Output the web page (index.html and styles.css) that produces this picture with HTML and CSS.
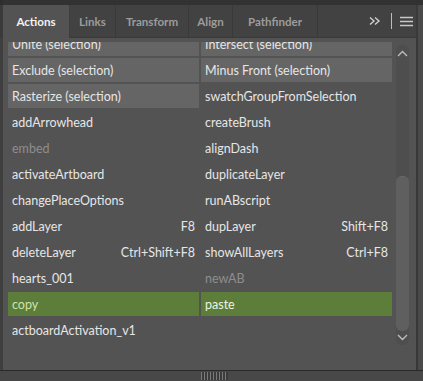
FILE: index.html
```html
<!DOCTYPE html>
<html>
<head>
<meta charset="utf-8">
<link rel="stylesheet" href="styles.css">
</head>
<body>
<div class="panel">
  <div class="topstrip"></div>
  <div class="tabbar">
    <div class="tab active">Actions</div>
    <div class="tab t-links">Links</div>
    <div class="tab t-transform">Transform</div>
    <div class="tab t-align">Align</div>
    <div class="tab t-path">Pathfinder</div>
    <div class="tabfill">
      <svg class="more" width="12" height="10" viewBox="0 0 12 10"><path d="M1 1.5 L5 5 L1 8.5 M6 1.5 L10 5 L6 8.5" fill="none" stroke="#d0d0d0" stroke-width="1.4"/></svg>
      <span class="vsep"></span>
      <svg class="menu" width="13" height="11" viewBox="0 0 13 11"><path d="M0 1.5 H13 M0 5.5 H13 M0 9.5 H13" stroke="#c8c8c8" stroke-width="1.3"/></svg>
    </div>
  </div>
  <div class="content">
    <div class="viewport">
      <div class="grid">
        <div class="row btn">Unite (selection)</div>
        <div class="row btn">Intersect (selection)</div>
        <div class="row btn">Exclude (selection)</div>
        <div class="row btn">Minus Front (selection)</div>
        <div class="row btn">Rasterize (selection)</div>
        <div class="row">swatchGroupFromSelection</div>
        <div class="row">addArrowhead</div>
        <div class="row">createBrush</div>
        <div class="row dis">embed</div>
        <div class="row">alignDash</div>
        <div class="row">activateArtboard</div>
        <div class="row">duplicateLayer</div>
        <div class="row">changePlaceOptions</div>
        <div class="row">runABscript</div>
        <div class="row"><span>addLayer</span><span class="key">F8</span></div>
        <div class="row"><span>dupLayer</span><span class="key">Shift+F8</span></div>
        <div class="row"><span>deleteLayer</span><span class="key">Ctrl+Shift+F8</span></div>
        <div class="row"><span>showAllLayers</span><span class="key">Ctrl+F8</span></div>
        <div class="row">hearts_001</div>
        <div class="row dis">newAB</div>
        <div class="row green copy">copy</div>
        <div class="row green">paste</div>
        <div class="row">actboardActivation_v1</div>
      </div>
    </div>
    <div class="scroll">
      <svg class="arrow up" width="11" height="7" viewBox="0 0 11 7"><path d="M1 6 L5.5 1.5 L10 6" fill="none" stroke="#bdbdbd" stroke-width="1.4"/></svg>
      <div class="track"><div class="thumb"></div></div>
      <svg class="arrow down" width="11" height="7" viewBox="0 0 11 7"><path d="M1 1 L5.5 5.5 L10 1" fill="none" stroke="#bdbdbd" stroke-width="1.4"/></svg>
    </div>
  </div>
  <div class="footer">
    <div class="grip"></div>
  </div>
</div>
</body>
</html>
```

FILE: styles.css
```css
html, body {
  margin: 0;
  padding: 0;
  background: #4a4a4a;
}
.panel {
  width: 423px;
  height: 381px;
  display: flex;
  flex-direction: column;
  font-family: Lato, "Liberation Sans", sans-serif;
  overflow: hidden;
}
.topstrip {
  height: 5px;
  flex: none;
  background: #323232;
  border-left: 3px solid #2e2e2e;
}
.tabbar {
  height: 33px;
  flex: none;
  display: flex;
  background: #424242;
  border-left: 3px solid #3a3a3a;
  margin-right: 5px;
  border-right: 2px solid #3a3a3a;
}
.tab {
  display: flex;
  align-items: center;
  justify-content: center;
  font-size: 11.6px;
  font-weight: bold;
  color: #9c9c9c;
  border-right: 1px solid #393939;
  border-bottom: 1px solid #3a3a3a;
  box-sizing: border-box;
}
.tab.active {
  width: 67px;
  background: #535353;
  color: #f2f2f2;
  border-bottom: none;
  border-right: 1px solid #3d3d3d;
}
.t-links { width: 46px; }
.t-transform { width: 73px; }
.t-align { width: 44px; }
.t-path { width: 85px; }
.tabfill {
  flex: 1;
  display: flex;
  align-items: center;
  justify-content: flex-end;
  padding-right: 3px;
  border-bottom: 1px solid #3a3a3a;
}
.more { margin-right: 10px; }
.vsep {
  width: 1px;
  height: 16px;
  background: #bdbdbd;
  margin-right: 8px;
}
.content {
  flex: 1;
  display: flex;
  align-items: flex-start;
  background: #535353;
  border-left: 3px solid #3f3f3f;
  border-right: 2px solid #383838;
  margin-right: 5px;
  min-height: 0;
}
.viewport {
  width: 389px;
  height: 328px;
  margin-top: 4px;
  overflow: hidden;
  padding-left: 5px;
  box-sizing: border-box;
}
.grid {
  margin-top: -10px;
  display: grid;
  grid-template-columns: 191px 191px;
  column-gap: 2px;
  row-gap: 2px;
}
.row {
  height: 24px;
  display: flex;
  align-items: center;
  justify-content: space-between;
  padding: 0 4px;
  font-size: 12.5px;
  color: #e6e6e6;
  white-space: nowrap;
}
.row.btn {
  background: #656565;
}
.row.dis {
  color: #8e8e8e;
}
.row.green {
  background: #5d7e3a;
  color: #eef2e6;
}
.row.green.copy {
  color: #cfe3ad;
}
.key {
  color: #e6e6e6;
}
.scroll {
  width: 13px;
  height: 300px;
  margin-top: 7px;
  margin-left: 4px;
  display: flex;
  flex-direction: column;
  align-items: center;
  background: #4e4e4e;
  border-radius: 6px;
}
.arrow {
  flex: none;
}
.arrow.up {
  margin-top: 5px;
  margin-bottom: 3px;
}
.arrow.down {
  margin-top: 3px;
  margin-bottom: 4px;
}
.track {
  width: 13px;
  flex: 1;
  display: flex;
  flex-direction: column;
  justify-content: flex-end;
}
.thumb {
  height: 154px;
  background: #5f5f5f;
  border-radius: 6px;
  border-top: 1px solid #6a6a6a;
}
.footer {
  height: 10px;
  flex: none;
  border-top: 1px solid #2a2a2a;
  background: #484848;
  display: flex;
  justify-content: center;
}
.grip {
  width: 27px;
  height: 8px;
  margin-top: 1px;
  margin-left: 5px;
  background: repeating-linear-gradient(90deg, #7a7a7a 0 1px, #3c3c3c 1px 3px);
}
```
